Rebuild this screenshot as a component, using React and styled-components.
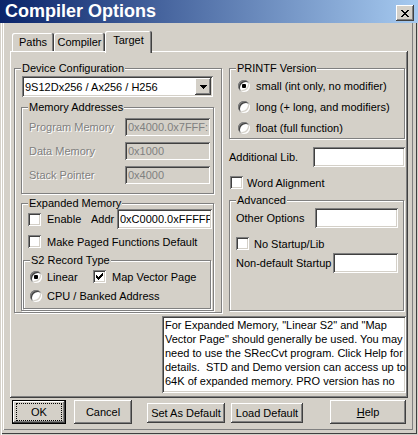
import React from 'react';
import styled, { createGlobalStyle } from 'styled-components';

const FACE = '#d4d0c8';
const SHADOW = '#808080';
const DARK = '#404040';

const raised = `inset -1px -1px 0 ${DARK}, inset 1px 1px 0 #fff, inset -2px -2px 0 ${SHADOW}, inset 2px 2px 0 ${FACE}`;
const sunken = `inset 1px 1px 0 ${SHADOW}, inset -1px -1px 0 #fff, inset 2px 2px 0 ${DARK}, inset -2px -2px 0 ${FACE}`;

const CLOSE = ['##....##', '.##..##.', '..####..', '...##...', '..####..', '.##..##.', '##....##'];
const CHECK = ['......#', '.....##', '#...###', '##.###.', '#####..', '.###...', '..#....'];
const ARROW = ['#######', '.#####.', '..###..', '...#...'];

const NOTE = `For Expanded Memory, "Linear S2" and "Map
Vector Page" should generally be used. You may
need to use the SRecCvt program. Click Help for
details.  STD and Demo version can access up to
64K of expanded memory. PRO version has no`;

const memory = [
  ['Program Memory', '0x4000.0x7FFF:(0x30-0x3F)'],
  ['Data Memory', '0x1000'],
  ['Stack Pointer', '0x4000'],
];

const GlobalStyle = createGlobalStyle`
  html, body { margin: 0; padding: 0; background: ${FACE}; }
  body {
    font-family: "Liberation Sans", Arial, sans-serif;
    font-size: 11px;
    color: #000;
  }
  *, *::before, *::after { box-sizing: border-box; }
`;

const Window = styled.div`
  width: 418px;
  height: 435px;
  display: flex;
  flex-direction: column;
  background: ${FACE};
  box-shadow: inset 1px 0 0 ${FACE}, inset 2px 0 0 #fff, inset -1px -1px 0 ${FACE}, inset -2px -2px 0 ${DARK};
`;

const TitleBar = styled.div`
  height: 23px;
  flex-shrink: 0;
  display: flex;
  align-items: center;
  padding: 0 4px 0 5px;
  background: linear-gradient(to right, #0a246a, #a6caf0);
`;

const Title = styled.div`
  flex: 1;
  color: #fff;
  font-size: 18px;
  font-weight: bold;
  line-height: 23px;
  white-space: nowrap;
`;

const CloseButton = styled.button`
  width: 18px;
  height: 16px;
  margin-top: 3px;
  padding: 0;
  border: none;
  background: ${FACE};
  box-shadow: ${raised};
  display: flex;
  align-items: center;
  justify-content: center;
`;

const Body = styled.div`
  flex: 1;
  margin: 0 5px 5px 3px;
  padding: 8px 4px 0 7px;
  display: flex;
  flex-direction: column;
  box-shadow: inset 1px 0 0 #fff, inset -1px -1px 0 ${SHADOW};
`;

const TabRow = styled.div`
  position: relative;
  z-index: 1;
  display: flex;
  align-items: flex-end;
  height: 22px;
  margin-bottom: -2px;
  padding-left: 2px;
`;

const Tab = styled.div`
  width: ${p => p.$w}px;
  height: ${p => (p.$active ? 22 : 18)}px;
  margin-bottom: ${p => (p.$active ? 0 : 2)}px;
  padding-top: 3px;
  text-align: center;
  line-height: 13px;
  background: ${FACE};
  border-radius: 2px 2px 0 0;
  box-shadow: inset -1px 0 0 ${DARK}, inset 1px 1px 0 #fff, inset -2px 0 0 ${SHADOW};
`;

const Panel = styled.div`
  width: 398px;
  height: 347px;
  padding: 11px 3px 5px 4px;
  display: grid;
  grid-template-columns: 208px 176px;
  align-content: start;
  column-gap: 7px;
  row-gap: 3px;
  background: ${FACE};
  box-shadow: inset -1px -1px 0 ${DARK}, inset 1px 1px 0 #fff, inset -2px -2px 0 ${SHADOW};
`;

const Column = styled.div`
  display: flex;
  flex-direction: column;
`;

const Group = styled.fieldset`
  margin: ${p => p.$m || '0'};
  padding: 0;
  min-width: 0;
  border: 1px solid ${SHADOW};
  box-shadow: inset 1px 1px 0 #fff, 1px 1px 0 #fff;
`;

const Legend = styled.legend`
  margin-left: 6px;
  padding: 0 1px;
  line-height: 13px;
  background: ${FACE};
`;

const GroupBody = styled.div`
  display: flex;
  flex-direction: column;
  gap: ${p => p.$gap || 0}px;
  padding: ${p => p.$pad};
`;

const Row = styled.div`
  display: flex;
  align-items: center;
  height: ${p => p.$h || 13}px;
  margin-top: ${p => p.$mt || 0}px;
  padding-left: ${p => p.$pl || 0}px;
  white-space: nowrap;
`;

const Option = styled.label`
  display: flex;
  align-items: center;
  flex-shrink: 0;
  gap: ${p => p.$gap || 5}px;
  width: ${p => (p.$w ? `${p.$w}px` : 'auto')};
  height: 13px;
  white-space: nowrap;
`;

const Text = styled.span`
  white-space: nowrap;
  color: ${p => (p.$disabled ? SHADOW : '#000')};
  text-shadow: ${p => (p.$disabled ? '1px 1px 0 #fff' : 'none')};
`;

const Field = styled.input`
  flex-shrink: 0;
  width: ${p => p.$w}px;
  height: ${p => p.$h || 20}px;
  margin: 0 0 0 auto;
  padding: 0 2px 0 3px;
  border: none;
  outline: none;
  font: inherit;
  color: ${p => (p.disabled ? SHADOW : '#000')};
  background: ${p => (p.disabled ? FACE : '#fff')};
  box-shadow: ${sunken};
`;

const Box = styled.span`
  flex-shrink: 0;
  width: 13px;
  height: 13px;
  display: flex;
  align-items: center;
  justify-content: center;
  background: #fff;
  box-shadow: ${sunken};
`;

const RadioBox = styled.span`
  flex-shrink: 0;
  width: 12px;
  height: 12px;
  border-radius: 50%;
  display: flex;
  align-items: center;
  justify-content: center;
  background: #fff;
  box-shadow: inset 1px 1px 0 ${SHADOW}, inset -1px -1px 0 #fff, inset 2px 2px 0 ${DARK}, inset -2px -2px 0 ${FACE};
`;

const RadioDot = styled.span`
  width: 4px;
  height: 4px;
  border-radius: 1px;
  background: #000;
`;

const Combo = styled.div`
  display: flex;
  align-items: center;
  width: 191px;
  height: 21px;
  margin-left: 1px;
  padding: 2px;
  background: #fff;
  box-shadow: ${sunken};
`;

const ComboValue = styled.span`
  flex: 1;
  padding-left: 1px;
  white-space: nowrap;
  overflow: hidden;
`;

const ComboButton = styled.span`
  width: 16px;
  height: 17px;
  display: flex;
  align-items: center;
  justify-content: center;
  background: ${FACE};
  box-shadow: ${raised};
`;

const Note = styled.div`
  grid-column: 1 / -1;
  justify-self: end;
  width: 244px;
  height: 77px;
  margin-right: -1px;
  padding: 2px 2px 0 3px;
  line-height: 14px;
  white-space: pre;
  overflow: hidden;
  background: #fff;
  box-shadow: ${sunken};
`;

const ButtonRow = styled.div`
  display: flex;
  align-items: flex-start;
  height: 24px;
  margin-top: 2px;
`;

const Button = styled.button`
  flex-shrink: 0;
  width: ${p => p.$w}px;
  height: ${p => p.$h || 24}px;
  margin: ${p => p.$mt || 0}px 0 0 ${p => p.$ml || 0}px;
  padding: 0;
  display: flex;
  align-items: center;
  justify-content: center;
  font: inherit;
  color: #000;
  background: ${FACE};
  border: ${p => (p.$default ? '1px solid #000' : 'none')};
  box-shadow: ${raised};
`;

const FocusRing = styled.span`
  width: calc(100% - 6px);
  height: calc(100% - 4px);
  display: flex;
  align-items: center;
  justify-content: center;
  border: 1px dotted #000;
`;

const Pixels = ({ rows }) => (
  <svg width={rows[0].length} height={rows.length} shapeRendering="crispEdges" style={{ display: 'block' }}>
    {rows.flatMap((r, y) =>
      [...r].map((c, x) => (c === '#' ? <rect key={`${x}-${y}`} x={x} y={y} width="1" height="1" fill="#000" /> : null))
    )}
  </svg>
);

const Check = ({ checked }) => <Box>{checked && <Pixels rows={CHECK} />}</Box>;
const Radio = ({ checked }) => <RadioBox>{checked && <RadioDot />}</RadioBox>;

export default function App() {
  return (
    <>
      <GlobalStyle />
      <Window>
        <TitleBar>
          <Title>Compiler Options</Title>
          <CloseButton aria-label="Close">
            <Pixels rows={CLOSE} />
          </CloseButton>
        </TitleBar>
        <Body>
          <TabRow>
            <Tab $w={42}>Paths</Tab>
            <Tab $w={51}>Compiler</Tab>
            <Tab $w={47} $active>Target</Tab>
          </TabRow>
          <Panel>
            <Group>
              <Legend>Device Configuration</Legend>
              <GroupBody $pad="1px 7px 1px 6px">
                <Combo>
                  <ComboValue>9S12Dx256 / Ax256 / H256</ComboValue>
                  <ComboButton>
                    <Pixels rows={ARROW} />
                  </ComboButton>
                </Combo>
                <Group $m="4px 0 0">
                  <Legend>Memory Addresses</Legend>
                  <GroupBody $pad="4px 3px 9px 7px" $gap={6}>
                    {memory.map(([label, value]) => (
                      <Row $h={18} key={label}>
                        <Text $disabled>{label}</Text>
                        <Field $w={85} $h={18} disabled defaultValue={value} />
                      </Row>
                    ))}
                  </GroupBody>
                </Group>
                <Group $m="3px 0 0">
                  <Legend>Expanded Memory</Legend>
                  <GroupBody $pad="0 1px 1px 1px">
                    <Row $h={20} $mt={-1} $pl={5}>
                      <Option $w={63} $gap={6}>
                        <Check />
                        Enable
                      </Option>
                      <Text>Addr</Text>
                      <Field $w={95} readOnly defaultValue="0xC0000.0xFFFFF" />
                    </Row>
                    <Row $mt={6} $pl={5}>
                      <Option $gap={6}>
                        <Check />
                        Make Paged Functions Default
                      </Option>
                    </Row>
                    <Group $m="6px 1px 0 0">
                      <Legend>S2 Record Type</Legend>
                      <GroupBody $pad="3px 0 6px 6px" $gap={6}>
                        <Row>
                          <Option $w={63}>
                            <Radio checked />
                            Linear
                          </Option>
                          <Option $gap={6}>
                            <Check checked />
                            Map Vector Page
                          </Option>
                        </Row>
                        <Row>
                          <Option>
                            <Radio />
                            CPU / Banked Address
                          </Option>
                        </Row>
                      </GroupBody>
                    </Group>
                  </GroupBody>
                </Group>
              </GroupBody>
            </Group>

            <Column>
              <Group>
                <Legend>PRINTF Version</Legend>
                <GroupBody $pad="4px 0 4px 8px" $gap={8}>
                  <Option $gap={6}>
                    <Radio checked />
                    small (int only, no modifier)
                  </Option>
                  <Option $gap={6}>
                    <Radio />
                    long (+ long, and modifiers)
                  </Option>
                  <Option $gap={6}>
                    <Radio />
                    float (full function)
                  </Option>
                </GroupBody>
              </Group>
              <Row $h={20} $mt={8}>
                <Text>Additional Lib.</Text>
                <Field $w={92} readOnly defaultValue="" />
              </Row>
              <Row $mt={9} $pl={1}>
                <Option $gap={4}>
                  <Check />
                  Word Alignment
                </Option>
              </Row>
              <Group $m="5px 1px 0 0">
                <Legend>Advanced</Legend>
                <GroupBody $pad="1px 5px 37px 6px">
                  <Row $h={20}>
                    <Text>Other Options</Text>
                    <Field $w={83} readOnly defaultValue="" />
                  </Row>
                  <Row $mt={9}>
                    <Option>
                      <Check />
                      No Startup/Lib
                    </Option>
                  </Row>
                  <Row $h={20} $mt={3}>
                    <Text>Non-default Startup</Text>
                    <Field $w={65} readOnly defaultValue="" />
                  </Row>
                </GroupBody>
              </Group>
            </Column>

            <Note>{NOTE}</Note>
          </Panel>
          <ButtonRow>
            <Button $w={54} $ml={2} $default>
              <FocusRing>OK</FocusRing>
            </Button>
            <Button $w={58} $ml={8}>Cancel</Button>
            <Button $w={78} $h={20} $mt={3} $ml={15}>Set As Default</Button>
            <Button $w={72} $h={20} $mt={3} $ml={6}>Load Default</Button>
            <Button $w={76} $ml={27}>
              <span>
                <u>H</u>elp
              </span>
            </Button>
          </ButtonRow>
        </Body>
      </Window>
    </>
  );
}
